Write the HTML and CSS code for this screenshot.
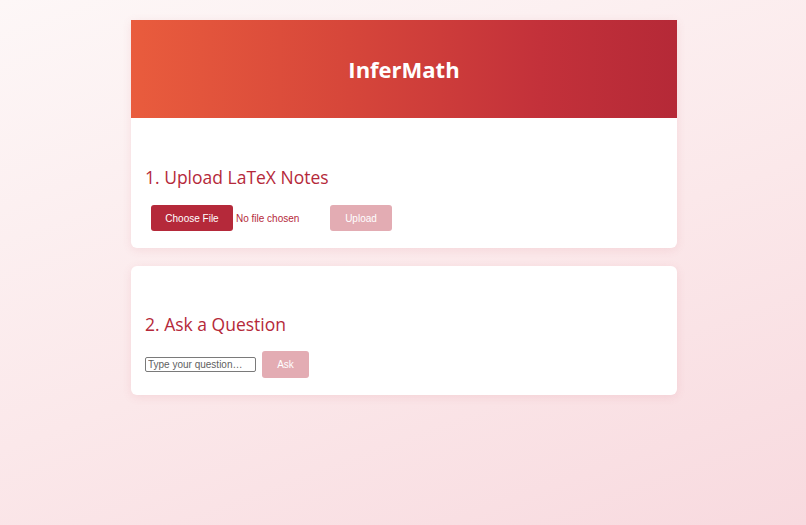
FILE: index.html
```html
<!DOCTYPE html>
<html lang="en">
<head>
<meta charset="utf-8">
<title>InferMath</title>
<link rel="stylesheet" href="styles.css">
</head>
<body>
<main class="container">
  <section class="card card-upload">
    <header class="banner"><h1 class="title">InferMath</h1></header>
    <div class="card-body">
      <h2 class="section-title">1. Upload LaTeX Notes</h2>
      <div class="row">
        <label class="file-picker">
          <input class="file-input" type="file">
          <span class="file-btn">Choose File</span>
          <span class="file-name">No file chosen</span>
        </label>
        <button class="btn btn-disabled btn-upload" disabled>Upload</button>
      </div>
    </div>
  </section>
  <section class="card">
    <div class="card-body card-body-ask">
      <h2 class="section-title">2. Ask a Question</h2>
      <div class="row">
        <input class="question" type="text" placeholder="Type your question…">
        <button class="btn btn-disabled btn-ask" disabled>Ask</button>
      </div>
    </div>
  </section>
</main>
</body>
</html>
```
FILE: styles.css
```css
html, body {
  margin: 0;
  padding: 0;
  height: 100%;
}
body {
  background: linear-gradient(160deg, #fdf7f7 0%, #fbe8ea 55%, #f8dadf 100%);
  font-family: "Liberation Sans", Arial, sans-serif;
  padding-left: 2px;
  box-sizing: border-box;
}
.container {
  width: 546px;
  margin: 0 auto;
  padding-top: 20px;
  display: flex;
  flex-direction: column;
  gap: 18px;
}
.card {
  background: #ffffff;
  border-radius: 6px;
  box-shadow: 0 2px 10px rgba(200, 80, 100, 0.12);
  overflow: hidden;
}
.card-upload {
  border-radius: 0 0 6px 6px;
}
.banner {
  height: 98px;
  background: linear-gradient(90deg, #e95c3d 0%, #d6463a 40%, #c3313a 75%, #b52937 100%);
  display: flex;
  align-items: center;
  justify-content: center;
}
.title {
  margin: 0;
  color: #ffffff;
  font-family: "Open Sans", sans-serif;
  font-weight: 700;
  font-size: 22px;
}
.card-body {
  padding: 45px 14px 17px;
}
.card-body-ask {
  padding-top: 44px;
}
.card-body-ask .section-title {
  margin-bottom: 13px;
}
.section-title {
  margin: 0 0 14px;
  font-family: "Open Sans", sans-serif;
  font-weight: 400;
  font-size: 17.5px;
  line-height: 28px;
  color: #b5293a;
}
.row {
  display: flex;
  align-items: center;
}
.file-picker {
  display: flex;
  align-items: center;
  padding-left: 6px;
  width: 173px;
  cursor: pointer;
}
.file-input {
  display: none;
}
.file-btn {
  display: inline-flex;
  align-items: center;
  justify-content: center;
  width: 82px;
  height: 26px;
  background: #b5293a;
  color: #ffffff;
  font-size: 10px;
  border-radius: 3px;
}
.file-name {
  margin-left: 3px;
  font-size: 10px;
  color: #b5293a;
}
.btn {
  height: 26px;
  border: none;
  border-radius: 3px;
  color: #ffffff;
  font-family: "Liberation Sans", Arial, sans-serif;
  font-size: 10px;
  padding: 0;
}
.btn-disabled {
  background: #e3acb3;
}
.btn-upload {
  width: 62px;
  margin-left: 6px;
}
.question {
  width: 105px;
  height: 11px;
  padding: 1px 2px;
  border: 1px solid #7a7a7a;
  border-radius: 2px;
  font-family: "Liberation Sans", Arial, sans-serif;
  font-size: 10px;
  color: #333;
}
.question::placeholder {
  color: #5f5f5f;
}
.btn-ask {
  width: 47px;
  height: 27px;
  margin-left: 6px;
}
```
